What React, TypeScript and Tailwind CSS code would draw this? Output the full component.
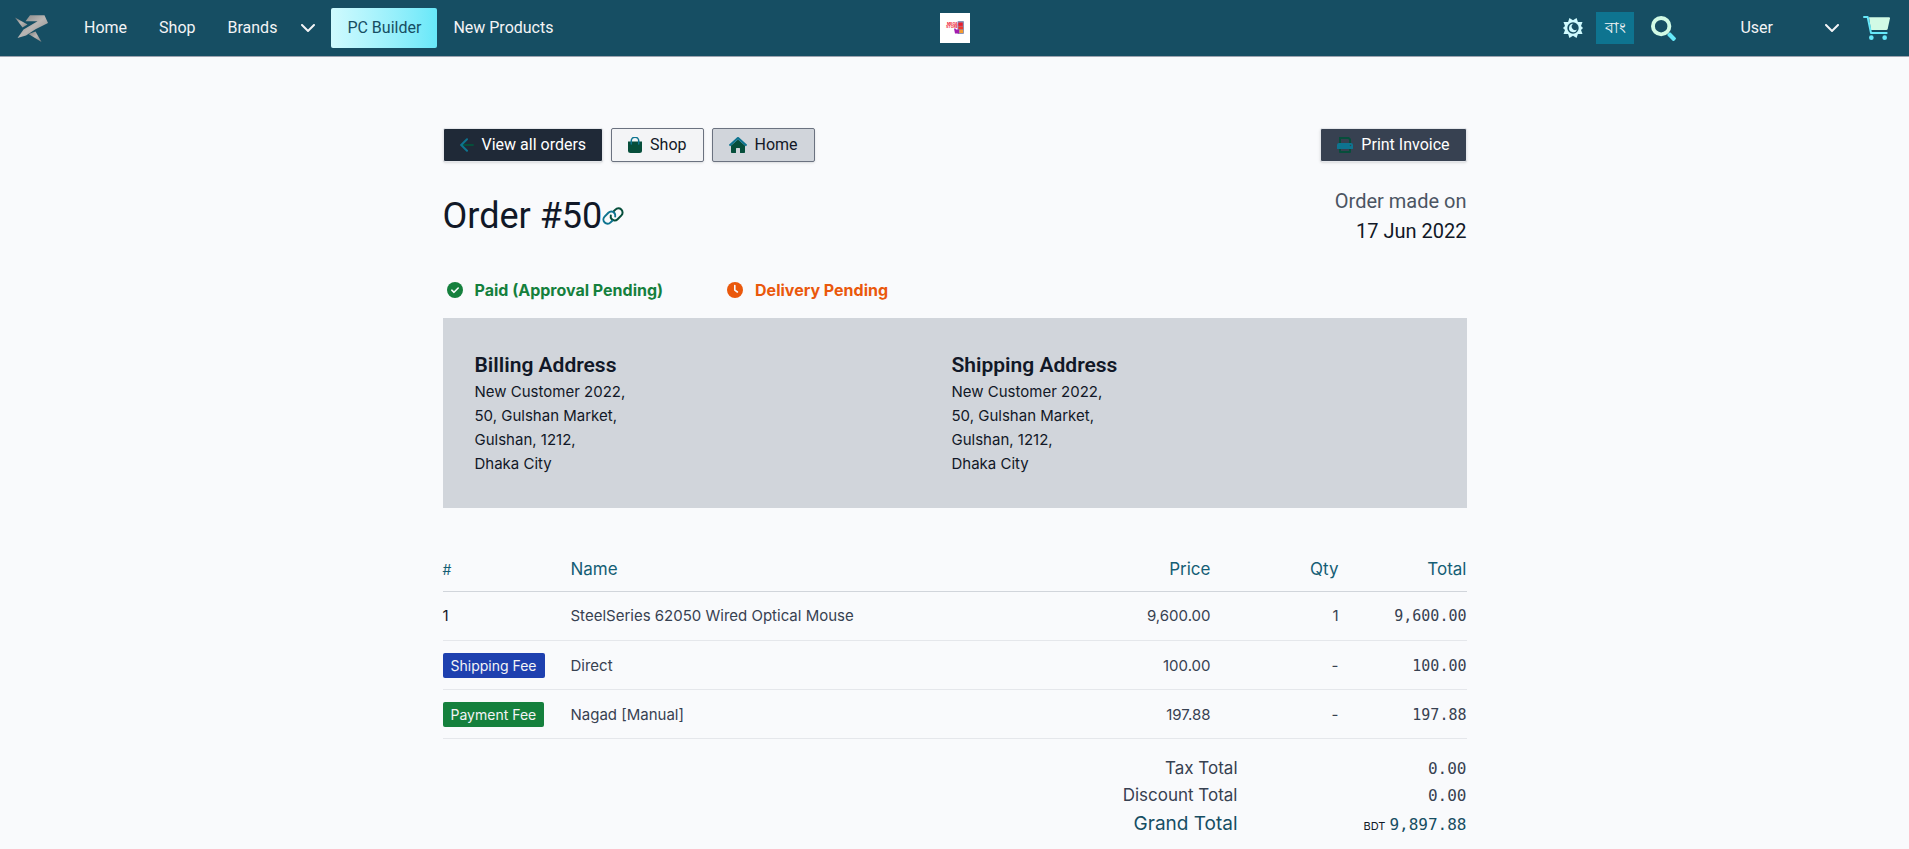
import React from "react";

type IconProps = { className?: string };

const RaptorLogo = () => (
  <svg viewBox="0 0 33 27" className="h-[27px] w-[33px]" aria-hidden="true">
    <defs>
      <linearGradient id="steel" x1="0" y1="0" x2="1" y2="1">
        <stop offset="0" stopColor="#7d7d7d" />
        <stop offset="0.5" stopColor="#b9b6b4" />
        <stop offset="1" stopColor="#858585" />
      </linearGradient>
    </defs>
    <g fill="url(#steel)">
      <path d="M0 2.5 12.5 9.5 7.5 12.5Z" />
      <path d="M15 0.3H29.5L33 8 20.5 14.3 11 20.5 2.5 23 8.5 14.5 22.5 6.3H10.5Z" />
      <path d="M13.5 19 20.5 16.5 26.5 27Z" />
    </g>
  </svg>
);

const Chevron = ({ className }: IconProps) => (
  <svg viewBox="0 0 14 8" className={className} fill="none" stroke="currentColor" strokeWidth="2" strokeLinecap="round" aria-hidden="true">
    <path d="M1 1 7 7 13 1" />
  </svg>
);

const StoreLogo = () => (
  <svg viewBox="0 0 30 30" className="size-[30px] bg-white" role="img" aria-label="Mega Store">
    <text x="7" y="12" fontSize="3.6" fontWeight="700" fill="#ee1c35" fontFamily="Inter, sans-serif">MEGA</text>
    <text x="6" y="15.2" fontSize="3.6" fontWeight="700" fill="#ee1c35" fontFamily="Inter, sans-serif">STORE</text>
    <rect x="17.5" y="8" width="6.5" height="13" rx="1" fill="#8b93b8" />
    <rect x="18.3" y="9.5" width="4.5" height="3.4" fill="#e81e2e" />
    <rect x="18.3" y="13.4" width="4.8" height="3" fill="#f0392b" />
    <rect x="19.5" y="16.8" width="3.6" height="3.2" fill="#f59a2f" />
    <path d="M14 15.6h1.5l.5 1h3v4h-4Z" fill="#a21caf" />
  </svg>
);

const ThemeIcon = () => (
  <svg viewBox="0 0 20 20" className="size-5" aria-hidden="true">
    <path
      fill="#cffafe"
      fillRule="evenodd"
      d="M10 2.2 13.6 0l1.3 4.1 4.6-.1-1.5 4 2 2-2 2 1.5 4-4.6-.1L13.6 20 10 17.8 6.4 20l-1.3-4.1L.5 16 2 12 0 10l2-2L.5 4l4.6.1L6.4 0ZM10 4.3a5.7 5.7 0 1 0 0 11.4 5.7 5.7 0 0 0 0-11.4Z"
    />
    <path fill="#cffafe" d="M10.3 5.8a4.2 4.2 0 1 0 3.8 5.8 3.3 3.3 0 1 1-3.8-5.8Z" />
  </svg>
);

const SearchIcon = () => (
  <svg viewBox="0 0 512 512" className="size-[25px]" aria-hidden="true">
    <path fill="#67e8f9" d="m505 443-100-100c-5-5-11-7-17-7h-16a210 210 0 0 1-36 36v16c0 6 2 12 7 17l100 100c9 9 24 9 34 0l28-28c9-10 9-25 0-34Z" />
    <path fill="#d1fae5" d="M208 0a208 208 0 1 0 0 416 208 208 0 0 0 0-416Zm0 336a128 128 0 1 1 0-256 128 128 0 0 1 0 256Z" />
  </svg>
);

const CartIcon = () => (
  <svg viewBox="0 0 81 72" className="h-6 w-[27px]" aria-hidden="true">
    <path fill="#d1fae5" d="M18 4H78C80 4 81 5 81 7L74 39C73 41 72 42 70 42H24Z" />
    <path d="M3 3H14L24 51H71" fill="none" stroke="#67e8f9" strokeWidth="6" strokeLinecap="round" strokeLinejoin="round" />
    <circle cx="25" cy="65" r="7" fill="#67e8f9" />
    <circle cx="65" cy="65" r="7" fill="#67e8f9" />
  </svg>
);

const ArrowIcon = () => (
  <svg viewBox="0 0 14 14" className="size-[14px]" fill="none" strokeWidth="2" strokeLinecap="round" aria-hidden="true">
    <path stroke="#064e3b" d="M3 7h10" />
    <path stroke="#0e7490" d="M7 1.2 1.2 7 7 12.8" />
  </svg>
);

const BagIcon = () => (
  <svg viewBox="0 0 448 512" className="h-4 w-[14px]" aria-hidden="true">
    <path fill="#064e3b" d="M0 144v288a80 80 0 0 0 80 80h288a80 80 0 0 0 80-80V144Z" />
    <path fill="#0e7490" d="M320 144v-16a96 96 0 0 0-192 0v96a24 24 0 0 1-48 0v-96a144 144 0 0 1 288 0v96a24 24 0 0 1-48 0Z" />
  </svg>
);

const HomeIcon = () => (
  <svg viewBox="0 0 576 512" className="h-4 w-[18px]" aria-hidden="true">
    <path fill="#064e3b" d="M64 270 288 80l224 190v218a24 24 0 0 1-24 24H368a16 16 0 0 1-16-16V368a16 16 0 0 0-16-16h-96a16 16 0 0 0-16 16v128a16 16 0 0 1-16 16H88a24 24 0 0 1-24-24Z" />
    <path fill="#0e7490" d="M570 236 314 10a40 40 0 0 0-52 0L6 236a16 16 0 0 0-2 24l22 26a16 16 0 0 0 22 2L278 84a16 16 0 0 1 20 0l230 204a16 16 0 0 0 22-2l22-26a16 16 0 0 0-2-24Z" />
  </svg>
);

const PrinterIcon = () => (
  <svg viewBox="0 0 512 512" className="size-4" aria-hidden="true">
    <path fill="#064e3b" d="M64 0h320l64 64v160h-64V90l-26-26H128v160H64Zm0 352h384v128a32 32 0 0 1-32 32H96a32 32 0 0 1-32-32Zm64 32v64h256v-64Z" fillRule="evenodd" />
    <path fill="#0e7490" fillRule="evenodd" d="M64 192h384a64 64 0 0 1 64 64v112a16 16 0 0 1-16 16H16a16 16 0 0 1-16-16V256a64 64 0 0 1 64-64Zm368 56a24 24 0 1 0 0 48 24 24 0 0 0 0-48Z" />
  </svg>
);

const LinkIcon = () => (
  <svg viewBox="0 0 22 18" className="h-[18px] w-[22px]" fill="none" strokeWidth="2" strokeLinecap="round" aria-hidden="true">
    <path stroke="#064e3b" d="M11.7 4.3 13.4 2.6a4.1 4.1 0 0 1 6 5.8L15.6 12.2a4.1 4.1 0 0 1-6-.2 4 4 0 0 1-.8-3.6" />
    <path stroke="#0e7490" d="M10.3 13.7 8.6 15.4a4.1 4.1 0 0 1-6-5.8L6.4 5.8a4.1 4.1 0 0 1 6 .2 4 4 0 0 1 .8 3.6" />
  </svg>
);

const CheckCircle = () => (
  <svg viewBox="0 0 16 16" className="size-4" aria-hidden="true">
    <circle cx="8" cy="8" r="8" fill="currentColor" />
    <path d="M4.8 8.2 7 10.3 11.2 6" fill="none" stroke="#f8fafc" strokeWidth="1.6" strokeLinecap="round" strokeLinejoin="round" />
  </svg>
);

const ClockCircle = () => (
  <svg viewBox="0 0 16 16" className="size-4" aria-hidden="true">
    <circle cx="8" cy="8" r="8" fill="currentColor" />
    <path d="M7.8 3.5V8.2L10.4 10" fill="none" stroke="#f8fafc" strokeWidth="1.6" strokeLinecap="round" strokeLinejoin="round" />
  </svg>
);

const Header = () => (
  <header className="grid h-[57px] grid-cols-[1fr_auto_1fr] items-center border-b border-[#9ca3af] bg-[#164e63] px-[15px] font-[Roboto,sans-serif] text-[#f3f4f6]">
    <nav className="flex items-center">
      <a href="#" aria-label="Start page" className="mr-5">
        <RaptorLogo />
      </a>
      <a href="#" className="px-4 py-2">Home</a>
      <a href="#" className="px-4 py-2">Shop</a>
      <button type="button" className="flex items-center gap-6 px-4 py-2">
        Brands
        <Chevron className="h-2 w-[14px]" />
      </button>
      <a href="#" className="rounded-xs bg-linear-to-r from-[#cffafe] to-[#67e8f9] px-4 py-2 text-[#164e63]">PC Builder</a>
      <a href="#" className="px-4 py-2">New Products</a>
    </nav>
    <a href="#">
      <StoreLogo />
    </a>
    <div className="flex items-center justify-end pr-1">
      <button type="button" aria-label="Switch theme" className="mr-[13px]">
        <ThemeIcon />
      </button>
      <button type="button" className="mr-[17px] h-8 w-[38px] bg-[#0e7490]">বাং</button>
      <button type="button" aria-label="Search" className="mr-16">
        <SearchIcon />
      </button>
      <button type="button" className="mr-6 flex items-center gap-[52px]">
        User
        <Chevron className="h-2 w-[14px]" />
      </button>
      <a href="#" aria-label="Cart">
        <CartIcon />
      </a>
    </div>
  </header>
);

const buttonBase = "flex items-center gap-2 rounded-xs border px-4 py-1 shadow-sm ";

const Address = ({ title, lines }: { title: string; lines: string[] }) => (
  <section>
    <h2 className="font-[Roboto,sans-serif] text-[21px]/[30px] font-semibold">{title}</h2>
    <address className="text-[15px]/6 not-italic">
      {lines.map((line) => (
        <div key={line}>{line}</div>
      ))}
    </address>
  </section>
);

const address = ["New Customer 2022,", "50, Gulshan Market,", "Gulshan, 1212,", "Dhaka City"];

const rows = [
  { label: "1", badge: "", name: "SteelSeries 62050 Wired Optical Mouse", price: "9,600.00", qty: "1", total: "9,600.00" },
  { label: "Shipping Fee", badge: "bg-[#1e40af]", name: "Direct", price: "100.00", qty: "-", total: "100.00" },
  { label: "Payment Fee", badge: "bg-[#15803d]", name: "Nagad [Manual]", price: "197.88", qty: "-", total: "197.88" },
];

const mono = "font-['DejaVu_Sans_Mono',monospace]";
const head = "border-b border-[#d1d5db] py-2 font-normal ";
const cell = "border-b border-[#e5e7eb] pt-3 pb-2 align-baseline ";

export default function App() {
  return (
    <div className="min-h-screen bg-[#f9fafc] font-[Inter,sans-serif] text-[#111827]">
      <Header />
      <main className="mx-auto max-w-5xl pt-[71px]">
        <div className="flex justify-between font-[Roboto,sans-serif]">
          <div className="flex gap-2">
            <a href="#" className={buttonBase + "border-[#e5e7eb] bg-[#1f2937] text-white"}>
              <ArrowIcon />
              View all orders
            </a>
            <a href="#" className={buttonBase + "border-[#6b7280] bg-[#f3f4f6]"}>
              <BagIcon />
              Shop
            </a>
            <a href="#" className={buttonBase + "border-[#6b7280] bg-[#d1d5db]"}>
              <HomeIcon />
              Home
            </a>
          </div>
          <button type="button" className={buttonBase + "border-[#e5e7eb] bg-[#374151] text-white"}>
            <PrinterIcon />
            Print Invoice
          </button>
        </div>

        <div className="mt-6 flex items-center justify-between font-[Roboto,sans-serif]">
          <div className="flex items-center">
            <h1 className="text-4xl">Order #50</h1>
            <a href="#" aria-label="Link to order">
              <LinkIcon />
            </a>
          </div>
          <div className="text-right text-xl/[30px]">
            <p className="text-[#4b5563]">Order made on</p>
            <p>17 Jun 2022</p>
          </div>
        </div>

        <div className="mt-8 mb-4 flex gap-16 px-1 text-base/6 font-bold">
          <p className="flex items-center gap-3 text-[#15803d]">
            <CheckCircle />
            Paid (Approval Pending)
          </p>
          <p className="flex items-center gap-3 text-[#ea580c]">
            <ClockCircle />
            Delivery Pending
          </p>
        </div>

        <div className="grid grid-cols-[477px_1fr] bg-[#d1d5db] p-8">
          <Address title="Billing Address" lines={address} />
          <Address title="Shipping Address" lines={address} />
        </div>

        <table className="mt-10 w-full table-fixed border-separate border-spacing-0 text-[15px]/6 text-[#374151]">
          <thead>
            <tr className="text-[17px]/[27px] text-[#155e75]">
              <th className={head + "w-32 text-left text-sm"}>#</th>
              <th className={head + "text-left"}>Name</th>
              <th className={head + "w-32 text-right"}>Price</th>
              <th className={head + "w-32 text-right"}>Qty</th>
              <th className={head + "w-32 text-right"}>Total</th>
            </tr>
          </thead>
          <tbody>
            {rows.map((row) => (
              <tr key={row.label} className="h-[49px]">
                <td className={cell + "text-[#111827]"}>
                  {row.badge ? (
                    <span className={"inline-block rounded-xs px-2 text-sm/[25px] text-[#f3f4f6] " + row.badge}>{row.label}</span>
                  ) : (
                    row.label
                  )}
                </td>
                <td className={cell}>{row.name}</td>
                <td className={cell + "text-right"}>{row.price}</td>
                <td className={cell + "text-right"}>{row.qty}</td>
                <td className={cell + "text-right " + mono}>{row.total}</td>
              </tr>
            ))}
          </tbody>
        </table>

        <dl className="mt-4 grid grid-cols-[1fr_229px] items-baseline text-right text-[17px]/[27px] text-[#374151]">
          <dt>Tax Total</dt>
          <dd className={"text-base/[27px] " + mono}>0.00</dd>
          <dt>Discount Total</dt>
          <dd className={"text-base/[27px] " + mono}>0.00</dd>
          <dt className="text-[19px]/[30px] text-[#164e63]">Grand Total</dt>
          <dd className="text-[#164e63]">
            <span className="mr-1 text-[11px] text-[#111827]">BDT</span>
            <span className={"text-base/[27px] " + mono}>9,897.88</span>
          </dd>
        </dl>
      </main>
    </div>
  );
}
